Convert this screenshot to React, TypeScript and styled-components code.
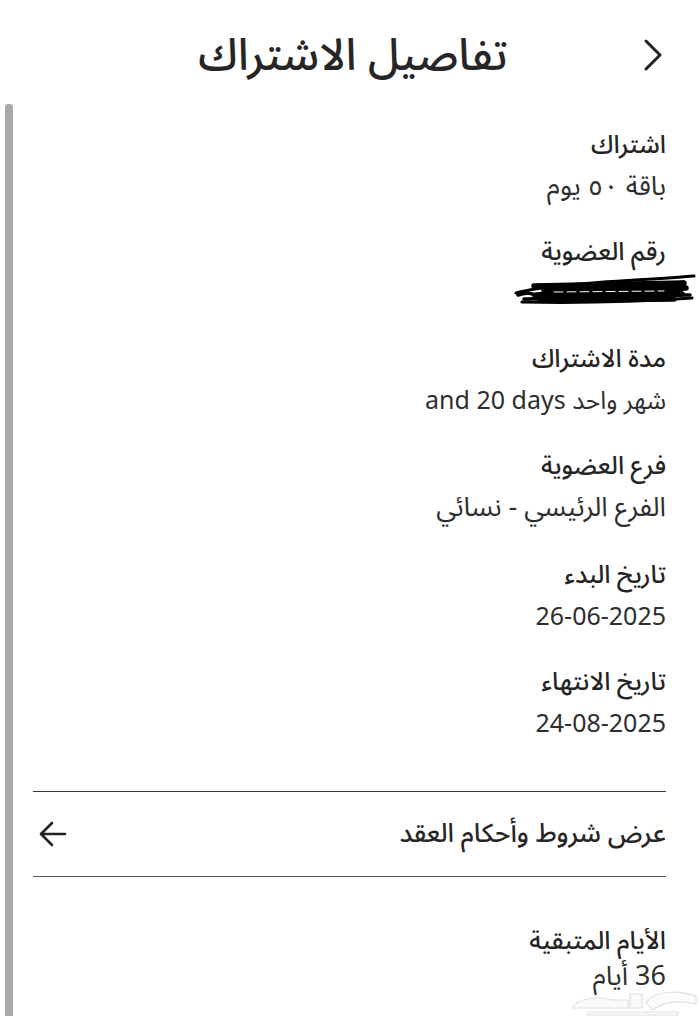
import React from "react";
import styled, { createGlobalStyle } from "styled-components";

const Global = createGlobalStyle`
  html, body { margin: 0; padding: 0; background: #ffffff; }
  body {
    font-family: "Noto Sans", "Noto Sans Arabic", "DejaVu Sans", sans-serif;
    color: #222222;
    -webkit-font-smoothing: antialiased;
  }
`;

const Page = styled.div`
  width: 700px;
  min-height: 1016px;
  position: relative;
  overflow: hidden;
  background: #fff;
`;

const Header = styled.header`
  height: 104px;
  display: flex;
  align-items: center;
  justify-content: center;
  position: relative;
  direction: rtl;
`;

const Title = styled.h1`
  margin: 0 0 0 6px;
  font-size: 44px;
  font-weight: 500;
  color: #262626;
  line-height: 1;
  padding-top: 2px;
`;

const BackButton = styled.button`
  position: absolute;
  right: 27px;
  top: 35px;
  width: 40px;
  height: 40px;
  border: 0;
  background: transparent;
  padding: 0;
  display: flex;
  align-items: center;
  justify-content: center;
`;

const Body = styled.div`
  display: flex;
  align-items: stretch;
  min-height: 912px;
`;

const ScrollTrack = styled.div`
  width: 8px;
  margin-left: 5px;
  background: #a9a9a9;
  border-radius: 3px 3px 0 0;
  flex: none;
`;

const Content = styled.main`
  flex: 1;
  direction: rtl;
  padding: 18px 34px 0 20px;
`;

const Field = styled.section<{ $gap?: number }>`
  display: flex;
  flex-direction: column;
  align-items: flex-start;
  margin-bottom: ${(p) => p.$gap ?? 23}px;
`;

const Label = styled.div`
  font-size: 25px;
  font-weight: 500;
  line-height: 42px;
  color: #242424;
`;

const Value = styled.div<{ $size?: number }>`
  font-size: ${(p) => p.$size ?? 27}px;
  font-weight: 400;
  line-height: 42px;
  color: #2e2e2e;
`;

const Scribble = styled.svg`
  display: block;
  margin-right: -30px;
`;

const LinkRow = styled.a`
  margin-top: 48px;
  border-top: 1.5px solid #3a3a3a;
  border-bottom: 1.5px solid #555555;
  height: 84px;
  display: flex;
  align-items: center;
  justify-content: space-between;
  color: #262626;
  text-decoration: none;
  font-size: 26px;
  font-weight: 500;
`;

const LinkText = styled.span`
  padding-bottom: 2px;
`;

const ArrowWrap = styled.span`
  display: flex;
  margin-left: 5px;
`;

const Remaining = styled.div`
  padding-top: 41px;
`;

const RemainingValue = styled(Value)`
  margin-top: -6px;
`;

const Watermark = styled.svg`
  position: absolute;
  right: 0;
  bottom: 0;
  pointer-events: none;
`;

const fields: { label: string; value: string; size?: number }[] = [
  { label: "اشتراك", value: "باقة ٥٠ يوم" },
  { label: "رقم العضوية", value: "" },
  { label: "مدة الاشتراك", value: "شهر واحد and 20 days", size: 25 },
  { label: "فرع العضوية", value: "الفرع الرئيسي - نسائي" },
  { label: "تاريخ البدء", value: "26-06-2025", size: 25 },
  { label: "تاريخ الانتهاء", value: "24-08-2025", size: 25 },
];

function ScribbleMark() {
  return (
    <Scribble width="182" height="42" viewBox="0 0 182 42">
      <g fill="none" stroke="#000" strokeLinecap="round" strokeLinejoin="round">
        <path d="M2 22 C 40 12, 120 10, 180 5" strokeWidth="3" />
        <path d="M4 24 C 20 18, 30 29, 10 28 C 60 27, 120 23, 176 24" strokeWidth="3.5" />
        <path d="M20 15 L 170 12 L 30 19 L 172 17 L 22 24 L 168 23 L 26 29 L 160 28" strokeWidth="5.5" />
        <path d="M8 31 C 60 32, 120 31, 178 27" strokeWidth="3" />
        <path d="M40 21 L 150 20" stroke="#fff" strokeWidth="1" strokeDasharray="9 4" />
      </g>
    </Scribble>
  );
}

export default function App() {
  return (
    <Page>
      <Global />
      <Header>
        <BackButton aria-label="back">
          <svg width="22" height="34" viewBox="0 0 22 34">
            <path d="M4 3 L18 17 L4 31" fill="none" stroke="#222" strokeWidth="3" strokeLinecap="round" strokeLinejoin="round" />
          </svg>
        </BackButton>
        <Title>تفاصيل الاشتراك</Title>
      </Header>
      <Body>
        <ScrollTrack />
        <Content>
          {fields.map((f, i) => (
            <Field key={f.label} $gap={i === fields.length - 1 ? 0 : i === 3 ? 25 : 23}>
              <Label>{f.label}</Label>
              {f.value ? <Value $size={f.size}>{f.value}</Value> : <ScribbleMark />}
            </Field>
          ))}
          <LinkRow href="#">
            <LinkText>عرض شروط وأحكام العقد</LinkText>
            <ArrowWrap>
              <svg width="30" height="28" viewBox="0 0 30 28">
                <path d="M27 14 H4 M14 3 L3 14 L14 25" fill="none" stroke="#222" strokeWidth="2.6" strokeLinecap="round" strokeLinejoin="round" />
              </svg>
            </ArrowWrap>
          </LinkRow>
          <Remaining>
            <Label>الأيام المتبقية</Label>
            <RemainingValue>36 أيام</RemainingValue>
          </Remaining>
        </Content>
      </Body>
      <Watermark width="132" height="34" viewBox="0 0 132 34">
        <g fill="#fbfbfb" stroke="#e0e0e0" strokeWidth="1.2" strokeLinejoin="round">
          <path d="M4 26 C 10 16, 30 14, 44 18 L 60 18 L 60 26 Z" />
          <path d="M62 12 L 74 12 L 74 26 L 62 26 Z" />
          <path d="M78 20 C 90 8, 110 8, 128 14 L 128 22 C 112 18, 96 20, 84 28 Z" />
          <path d="M20 30 L 110 30 L 110 33 L 20 33 Z" />
        </g>
      </Watermark>
    </Page>
  );
}
